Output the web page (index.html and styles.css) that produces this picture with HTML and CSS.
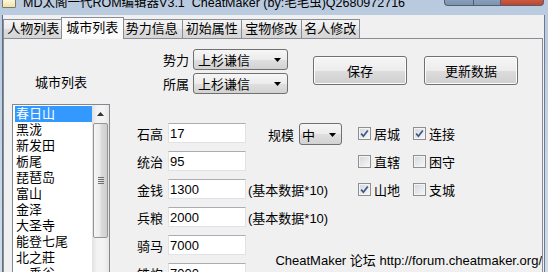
FILE: index.html
```html
<!DOCTYPE html>
<html lang="zh">
<head>
  <meta charset="UTF-8">
  <title>MD太阁一代ROM编辑器</title>
  <link rel="stylesheet" href="styles.css">
</head>
<body>
  <div class="window">
    <div class="titlebar">
      <span class="app-icon"></span>
      <span class="title">MD太阁一代ROM编辑器V3.1&nbsp;&nbsp;CheatMaker (by:毛毛虫)Q2680972716</span>
      <div class="caps">
        <span class="cap cap-min"></span>
        <span class="cap cap-max"></span>
        <span class="cap cap-close"></span>
      </div>
    </div>

    <div class="client">
      <div class="tabs">
        <div class="tab">人物列表</div>
        <div class="tab active">城市列表</div>
        <div class="tab">势力信息</div>
        <div class="tab">初始属性</div>
        <div class="tab">宝物修改</div>
        <div class="tab">名人修改</div>
      </div>

      <div class="panel">
        <div class="city-col">
          <div class="city-label">城市列表</div>
          <div class="listbox">
            <ul class="items">
              <li class="selected">春日山</li>
              <li>黑泷</li>
              <li>新发田</li>
              <li>栃尾</li>
              <li>琵琶岛</li>
              <li>富山</li>
              <li>金泽</li>
              <li>大圣寺</li>
              <li>能登七尾</li>
              <li>北之莊</li>
              <li>一乗谷</li>
            </ul>
            <div class="scrollbar">
              <div class="sb-up">
                <svg width="7" height="4" viewBox="0 0 7 4"><path d="M0 4 L3.5 0 L7 4 Z" fill="#333"/></svg>
              </div>
              <div class="sb-thumb">
                <span class="grip"></span>
              </div>
            </div>
          </div>
        </div>

        <div class="detail">
          <div class="top-row">
            <div class="owner-grid">
              <span class="lbl">势力</span>
              <div class="combo">上杉谦信<svg class="arrow" width="7" height="4" viewBox="0 0 7 4"><path d="M0 0 L7 0 L3.5 4 Z" fill="#000"/></svg></div>
              <span class="lbl">所属</span>
              <div class="combo">上杉谦信<svg class="arrow" width="7" height="4" viewBox="0 0 7 4"><path d="M0 0 L7 0 L3.5 4 Z" fill="#000"/></svg></div>
            </div>
            <div class="buttons">
              <button class="btn">保存</button>
              <button class="btn">更新数据</button>
            </div>
          </div>

          <div class="fields">
            <span class="f-label">石高</span>
            <input class="f-input" value="17">
            <div class="scale">
              <span>规模</span>
              <div class="combo combo-small">中<svg class="arrow" width="7" height="4" viewBox="0 0 7 4"><path d="M0 0 L7 0 L3.5 4 Z" fill="#000"/></svg></div>
            </div>
            <label class="check c1"><span class="box"><svg width="9" height="9" viewBox="0 0 9 9"><path d="M1.2 4.6 L3.4 7.2 L7.8 1.4" stroke="#3d5488" stroke-width="1.7" fill="none"/></svg></span>居城</label>
            <label class="check c2"><span class="box"><svg width="9" height="9" viewBox="0 0 9 9"><path d="M1.2 4.6 L3.4 7.2 L7.8 1.4" stroke="#3d5488" stroke-width="1.7" fill="none"/></svg></span>连接</label>

            <span class="f-label">统治</span>
            <input class="f-input" value="95">
            <label class="check c1"><span class="box"></span>直辖</label>
            <label class="check c2"><span class="box"></span>困守</label>

            <span class="f-label">金钱</span>
            <input class="f-input" value="1300">
            <span class="note">(基本数据*10)</span>
            <label class="check c1"><span class="box"><svg width="9" height="9" viewBox="0 0 9 9"><path d="M1.2 4.6 L3.4 7.2 L7.8 1.4" stroke="#3d5488" stroke-width="1.7" fill="none"/></svg></span>山地</label>
            <label class="check c2"><span class="box"></span>支城</label>

            <span class="f-label">兵粮</span>
            <input class="f-input" value="2000">
            <span class="note">(基本数据*10)</span>

            <span class="f-label">骑马</span>
            <input class="f-input" value="7000">

            <span class="f-label">铁炮</span>
            <input class="f-input" value="7000">

            <div class="footer">CheatMaker 论坛 http://forum.cheatmaker.org/</div>
          </div>
        </div>
      </div>
    </div>
  </div>
</body>
</html>
```

FILE: styles.css
```css
body {
  margin: 0;
  font-family: "Liberation Sans", "Noto Sans CJK SC", sans-serif;
  font-size: 13px;
  color: #000;
}
.window {
  width: 548px;
  height: 272px;
  overflow: hidden;
  display: flex;
  flex-direction: column;
  background: linear-gradient(#b9cadf, #d0dcea);
}
.titlebar {
  height: 15px;
  flex: none;
  display: flex;
  align-items: flex-start;
  overflow: hidden;
}
.app-icon {
  width: 12px;
  height: 9px;
  margin: -3px 0 0 2px;
  background: linear-gradient(#fffbe8, #f1e2a8);
  border: 1px solid #7b7b6b;
  border-radius: 1px;
}
.title {
  margin: -3px 0 0 7px;
  font-size: 12.5px;
  line-height: 13px;
  white-space: nowrap;
}
.caps {
  margin: -13px 4px 0 auto;
  display: flex;
}
.cap {
  height: 18px;
  border: 1px solid #4f5e72;
  border-top: none;
  background: linear-gradient(#a8bad1, #7d93b0);
}
.cap-min { width: 28px; border-radius: 0 0 0 4px; }
.cap-max { width: 26px; border-left: none; }
.cap-close {
  width: 42px;
  border-left: none;
  border-radius: 0 0 4px 0;
  background: linear-gradient(#e0907c, #c0442c);
}
.client {
  flex: 1;
  min-height: 0;
  margin: 0 3px 0 2px;
  display: flex;
  flex-direction: column;
  background: #f0f0f0;
  border-left: 1px solid #5f6f84;
  border-right: 1px solid #6b7b90;
}
.tabs {
  height: 23px;
  flex: none;
  display: flex;
  align-items: flex-end;
}
.tab {
  flex: 0 0 59.5px;
  box-sizing: border-box;
  height: 19px;
  border: 1px solid #898c95;
  border-bottom: none;
  border-right: none;
  background: linear-gradient(#f4f4f4, #ebebeb 50%, #dddddd 51%, #d6d6d6);
  text-align: center;
  line-height: 18px;
}
.tab:nth-child(6) { border-right: 1px solid #898c95; }
.tab.active {
  position: relative;
  z-index: 1;
  flex-basis: 63.5px;
  height: 22px;
  margin: 0 -2px -1px -2px;
  border-right: 1px solid #898c95;
  background: #fbfbfb;
  line-height: 20px;
}
.tab.active + .tab { border-left: none; }
.panel {
  flex: 1;
  min-height: 0;
  margin-right: 1px;
  display: flex;
  padding-left: 8px;
  border: 1px solid #898c95;
  border-bottom: none;
  background: #f0f0f0;
  overflow: hidden;
}
.city-col {
  width: 98px;
  flex: none;
}
.city-label {
  margin-top: 36px;
  line-height: 16px;
  text-align: center;
}
.listbox {
  margin-top: 13px;
  height: 190px;
  box-sizing: border-box;
  border: 1px solid #828790;
  background: #fff;
  display: flex;
}
.items {
  flex: 1;
  margin: 0;
  padding: 1px 0 0 2px;
  list-style: none;
}
.items li {
  line-height: 16px;
  padding-left: 1px;
  white-space: nowrap;
}
.items li.selected {
  background: #3399ff;
  color: #fff;
}
.scrollbar {
  width: 17px;
  flex: none;
  background: linear-gradient(90deg, #e2e2e2, #f3f3f3 30%, #f3f3f3 70%, #e6e6e6);
}
.sb-up {
  height: 17px;
  display: flex;
  align-items: center;
  justify-content: center;
}
.sb-thumb {
  height: 115px;
  margin: 1px 1px 0;
  box-sizing: border-box;
  border: 1px solid #959595;
  border-radius: 2px;
  background: linear-gradient(90deg, #f5f5f5, #ebebeb 45%, #dbdbdb 55%, #cfcfcf);
  display: flex;
  align-items: center;
  justify-content: center;
}
.grip {
  width: 6px;
  height: 7px;
  background: repeating-linear-gradient(#707070 0 1px, transparent 1px 2px);
}
.detail {
  flex: 1;
  margin-left: 27px;
}
.top-row {
  display: flex;
  align-items: flex-start;
  padding: 10px 0 0 26px;
}
.owner-grid {
  display: grid;
  grid-template-columns: auto 95px;
  grid-auto-rows: 21px;
  column-gap: 4px;
  row-gap: 3px;
  align-items: center;
}
.combo {
  height: 21px;
  box-sizing: border-box;
  display: flex;
  align-items: center;
  padding-left: 4px;
  border: 1px solid #707070;
  border-radius: 3px;
  background: linear-gradient(#f6f6f6, #ececec 50%, #e0e0e0 51%, #d2d2d2);
  white-space: nowrap;
}
.combo .arrow {
  margin: 1px 6px 0 auto;
}
.combo-small {
  width: 43px;
  height: 22px;
  padding-left: 2px;
}
.combo-small .arrow { margin-right: 5px; }
.buttons {
  display: flex;
  gap: 17px;
  margin: 7px 0 0 25px;
}
.btn {
  width: 94px;
  height: 29px;
  padding: 0;
  font: inherit;
  color: #000;
  border: 1px solid #707070;
  border-radius: 3px;
  background: linear-gradient(#f6f6f6, #ececec 50%, #dddddd 51%, #cfcfcf);
  box-shadow: inset 0 0 0 1px #fcfcfc;
}
.fields {
  margin-top: 29px;
  display: grid;
  grid-template-columns: 31px 78px 110px 55px auto;
  grid-auto-rows: 20px;
  row-gap: 8px;
  align-items: center;
}
.f-label { grid-column: 1; }
.f-input {
  grid-column: 2;
  width: 78px;
  height: 20px;
  box-sizing: border-box;
  margin: 0;
  padding: 0 0 0 1px;
  font: inherit;
  border: 1px solid #dfe3e8;
  border-top-color: #abadb3;
  background: #fff;
  outline: none;
}
.scale {
  grid-column: 3;
  align-self: start;
  display: flex;
  align-items: center;
  gap: 5px;
  padding-left: 22px;
}
.note {
  grid-column: 3;
  padding-left: 2px;
  white-space: nowrap;
}
.check {
  display: flex;
  align-items: center;
  gap: 3px;
  padding-left: 2px;
  white-space: nowrap;
}
.c1 { grid-column: 4; }
.c2 { grid-column: 5; }
.box {
  width: 13px;
  height: 13px;
  box-sizing: border-box;
  border: 1px solid #8e8f8f;
  background: linear-gradient(135deg, #d3d6dc, #f8f8f8);
  box-shadow: inset 0 0 0 1px #f4f4f4;
  display: flex;
  align-items: center;
  justify-content: center;
}
.footer {
  grid-column: 3 / -1;
  grid-row: 5 / span 2;
  justify-self: end;
  align-self: start;
  margin-top: 19px;
  line-height: 14px;
  white-space: nowrap;
}
```
